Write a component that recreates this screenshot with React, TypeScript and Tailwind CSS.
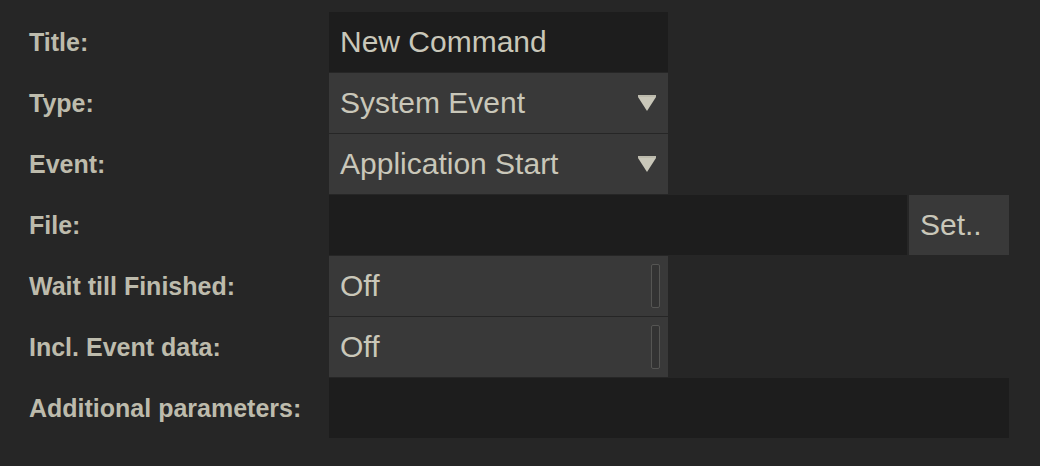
import React from "react";

const font = { fontFamily: '"Liberation Sans", Arial, sans-serif' };

function Label({ children }: { children: React.ReactNode }) {
  return (
    <div className="flex w-[329px] items-center pl-[29px] pt-[2px] text-[25px] font-bold text-[#bdbbac]">
      {children}
    </div>
  );
}

function Caret() {
  return (
    <svg width="18" height="16" viewBox="0 0 18 16" className="mr-[12px]">
      <rect x="0" y="0" width="18" height="2" fill="#bcbaac" />
      <polygon points="0,2 18,2 9,16" fill="#c9c7b9" />
    </svg>
  );
}

function Toggle() {
  return (
    <div className="mr-[8px] h-[44px] w-[9px] rounded-[2px] border border-[#555553] bg-[#333333]" />
  );
}

export default function App() {
  return (
    <div
      className="h-[466px] w-[1040px] bg-[#262626] pt-[12px] text-[#c9c7b9]"
      style={font}
    >
      <div className="flex flex-col gap-px">
        <div className="flex h-[60px]">
          <Label>Title:</Label>
          <div className="flex w-[339px] items-center bg-[#1d1d1d] pb-[2px] pl-[11px] text-[30px]">
            New Command
          </div>
        </div>
        <div className="flex h-[60px]">
          <Label>Type:</Label>
          <div className="flex w-[339px] items-center justify-between bg-[#393939] pl-[11px] text-[30px]">
            <span className="-translate-y-px">System Event</span>
            <Caret />
          </div>
        </div>
        <div className="flex h-[60px]">
          <Label>Event:</Label>
          <div className="flex w-[339px] items-center justify-between bg-[#393939] pl-[11px] text-[30px]">
            <span className="-translate-y-px">Application Start</span>
            <Caret />
          </div>
        </div>
        <div className="flex h-[60px]">
          <Label>File:</Label>
          <div className="w-[578px] bg-[#1d1d1d]" />
          <div className="ml-[2px] flex w-[100px] items-center bg-[#393939] pb-[2px] pl-[11px] text-[30px]">
            Set..
          </div>
        </div>
        <div className="flex h-[60px]">
          <Label>Wait till Finished:</Label>
          <div className="flex w-[339px] items-center justify-between bg-[#393939] pl-[11px] text-[30px]">
            <span className="-translate-y-px">Off</span>
            <Toggle />
          </div>
        </div>
        <div className="flex h-[60px]">
          <Label>Incl. Event data:</Label>
          <div className="flex w-[339px] items-center justify-between bg-[#393939] pl-[11px] text-[30px]">
            <span className="-translate-y-px">Off</span>
            <Toggle />
          </div>
        </div>
        <div className="flex h-[60px]">
          <Label>Additional parameters:</Label>
          <div className="w-[680px] bg-[#1d1d1d]" />
        </div>
      </div>
    </div>
  );
}
